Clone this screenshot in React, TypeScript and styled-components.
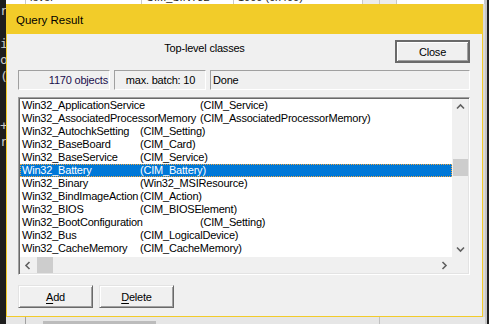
import styled, { createGlobalStyle } from 'styled-components';

const GlobalStyle = createGlobalStyle`
  html, body {
    margin: 0;
    padding: 0;
    background: #1e1e1e;
    overflow: hidden;
  }
  * {
    box-sizing: border-box;
  }
`;

const uiFont = `'Liberation Sans', Arial, sans-serif`;

interface ClassRow {
  name: string;
  parent: string;
  tab: number;
  selected?: boolean;
}

const rows: ClassRow[] = [
  { name: 'Win32_ApplicationService', parent: 'CIM_Service', tab: 178 },
  { name: 'Win32_AssociatedProcessorMemory', parent: 'CIM_AssociatedProcessorMemory', tab: 178 },
  { name: 'Win32_AutochkSetting', parent: 'CIM_Setting', tab: 118 },
  { name: 'Win32_BaseBoard', parent: 'CIM_Card', tab: 118 },
  { name: 'Win32_BaseService', parent: 'CIM_Service', tab: 118 },
  { name: 'Win32_Battery', parent: 'CIM_Battery', tab: 118, selected: true },
  { name: 'Win32_Binary', parent: 'Win32_MSIResource', tab: 118 },
  { name: 'Win32_BindImageAction', parent: 'CIM_Action', tab: 118 },
  { name: 'Win32_BIOS', parent: 'CIM_BIOSElement', tab: 118 },
  { name: 'Win32_BootConfiguration', parent: 'CIM_Setting', tab: 178 },
  { name: 'Win32_Bus', parent: 'CIM_LogicalDevice', tab: 118 },
  { name: 'Win32_CacheMemory', parent: 'CIM_CacheMemory', tab: 118 },
  { name: 'Win32_CDROMDrive', parent: 'CIM_CDROMDrive', tab: 118 },
];

// characters of the code editor peeking out at the left edge
const editorLines = ['r', '', 'i', 'o', '(', '', '', '+', 'r', '', '', '', '', '', '', '', '', '', ''];

/* ---------- desktop behind the dialog ---------- */

const Desktop = styled.div`
  position: relative;
  width: 489px;
  height: 324px;
  display: flex;
  overflow: hidden;
  font-family: ${uiFont};
`;

const EditorStrip = styled.div`
  width: 6px;
  overflow: hidden;
  background: #1e1e1e;
  color: #cccccc;
  font-family: 'DejaVu Sans Mono', monospace;
  font-size: 13px;
  line-height: 16.4px;
  padding-top: 3px;
  white-space: pre;
`;

const BackWindow = styled.div`
  width: 479px;
  display: flex;
  flex-direction: column;
  background: #d9d9d9;
`;

const BackTop = styled.div`
  height: 4px;
  background: #ffffff;
  display: flex;
  overflow: hidden;
  font-size: 11px;
  color: #222;
`;

const BackCell = styled.div<{ $w: number; $shade?: boolean }>`
  width: ${({ $w }) => $w}px;
  flex-shrink: 0;
  border-right: 1px solid #c8c8c8;
  background: ${({ $shade }) => ($shade ? '#ececec' : '#ffffff')};
  line-height: 4px;
  padding-left: 4px;
  margin-top: -5px;
  height: 9px;
  white-space: nowrap;
  overflow: hidden;
`;

const BackMiddle = styled.div`
  flex: 1;
`;

const BackBottom = styled.div`
  height: 7px;
  display: flex;
  background: #e6e6e6;
`;

const BackGutter = styled.div`
  width: 20px;
  border-right: 1px solid #a0a0a0;
`;

const BackScroll = styled.div`
  width: 354px;
  padding: 4px 0 0 17px;
  border-right: 1px solid #c0c0c0;
`;

const BackThumb = styled.div`
  width: 113px;
  height: 3px;
  background: #bcbcbc;
`;

const DarkEdge = styled.div`
  flex: 1;
  background: #1f1f1f;
  border-left: 2px solid #c6c6c6;
`;

/* ---------- dialog ---------- */

const Dialog = styled.div`
  position: absolute;
  left: 6px;
  top: 4px;
  width: 477px;
  height: 313px;
  border: 1px solid #f2cb2b;
  background: #f0f0f0;
  display: flex;
  flex-direction: column;
`;

const TitleBar = styled.div`
  height: 29px;
  flex-shrink: 0;
  background: #f2cc29;
  display: flex;
  align-items: center;
  padding-left: 9px;
  font-size: 11.5px;
  color: #000;
`;

const Body = styled.div`
  flex: 1;
  display: flex;
  flex-direction: column;
  padding: 6px 12px 0 11px;
  font-size: 11px;
  letter-spacing: -0.2px;
  color: #000;
`;

const Header = styled.div`
  display: flex;
  align-items: center;
  height: 23px;
`;

const Caption = styled.div`
  flex: 1;
  text-align: center;
  padding-bottom: 7px;
`;

const Button = styled.button<{ $default?: boolean }>`
  width: 75px;
  height: 23px;
  padding: 0;
  margin: 0;
  font-family: ${uiFont};
  font-size: 11px;
  letter-spacing: -0.2px;
  color: #000;
  background: #f0f0f0;
  border-style: solid;
  border-width: 1px;
  border-color: #e3e3e3 #696969 #696969 #e3e3e3;
  box-shadow: inset 1px 1px 0 #ffffff, inset -1px -1px 0 #a0a0a0;

  ${({ $default }) =>
    $default &&
    `
    border: 2px solid #6a6a6a;
    box-shadow: inset 1px 1px 0 #ffffff, inset -1px -1px 0 #a0a0a0;
  `}

  u {
    text-decoration: underline;
    text-underline-offset: 2px;
  }
`;

const CloseButton = styled(Button)`
  margin-left: 4px;
`;

const StatusRow = styled.div`
  display: grid;
  grid-template-columns: 92px 92px 1fr;
  gap: 4px;
  margin-top: 7px;
  height: 20px;
`;

const StatusBox = styled.div<{ $align: 'left' | 'center' | 'right'; $ink?: string }>`
  border-style: solid;
  border-width: 1px;
  border-color: #a0a0a0 #ffffff #ffffff #a0a0a0;
  display: flex;
  align-items: center;
  justify-content: ${({ $align }) =>
    $align === 'left' ? 'flex-start' : $align === 'right' ? 'flex-end' : 'center'};
  padding: 0 1px 0 2px;
  color: ${({ $ink }) => $ink || '#000'};
  white-space: nowrap;
`;

const ListBox = styled.div`
  margin-top: 7px;
  height: 178px;
  border-style: solid;
  border-width: 1px;
  border-color: #a0a0a0 #ffffff #ffffff #a0a0a0;
  box-shadow: inset 1px 1px 0 #696969, inset -1px -1px 0 #e3e3e3;
  padding: 1px;
  display: grid;
  grid-template-columns: 1fr 16px;
  grid-template-rows: 1fr 16px;
`;

const Rows = styled.div`
  background: #ffffff;
  overflow: hidden;
  white-space: nowrap;
`;

const Row = styled.div<{ $selected?: boolean }>`
  height: 13px;
  line-height: 13px;
  padding-left: 2px;
  display: flex;
  background: ${({ $selected }) => ($selected ? '#0078d7' : 'transparent')};
  color: ${({ $selected }) => ($selected ? '#ffffff' : '#000000')};
  outline: ${({ $selected }) => ($selected ? '1px dotted #f0a640' : 'none')};
  outline-offset: -1px;
`;

const ClassName = styled.span<{ $tab: number }>`
  display: inline-block;
  width: ${({ $tab }) => $tab}px;
  flex-shrink: 0;
`;

const ScrollBar = styled.div<{ $vertical?: boolean }>`
  background: #f0f0f0;
  display: flex;
  flex-direction: ${({ $vertical }) => ($vertical ? 'column' : 'row')};
`;

const ArrowButton = styled.div`
  width: 16px;
  height: 16px;
  flex-shrink: 0;
  display: flex;
  align-items: center;
  justify-content: center;
`;

const Track = styled.div<{ $vertical?: boolean }>`
  flex: 1;
  display: flex;
  flex-direction: ${({ $vertical }) => ($vertical ? 'column' : 'row')};
`;

const Thumb = styled.div<{ $vertical?: boolean }>`
  background: #cdcdcd;
  ${({ $vertical }) =>
    $vertical ? 'width: 15px; height: 17px; margin-left: 1px;' : 'width: 16px; height: 16px;'}
`;

const Corner = styled.div`
  background: #f0f0f0;
`;

const Footer = styled.div`
  display: flex;
  gap: 6px;
  margin-top: 10px;
`;

type Dir = 'up' | 'down' | 'left' | 'right';

const chevrons: Record<Dir, string> = {
  up: 'M1 5.5 L4.5 2 L8 5.5',
  down: 'M1 2.5 L4.5 6 L8 2.5',
  left: 'M5.5 1 L2 4.5 L5.5 8',
  right: 'M2.5 1 L6 4.5 L2.5 8',
};

const Chevron = ({ dir }: { dir: Dir }) => (
  <svg width="9" height="9" viewBox="0 0 9 9">
    <path d={chevrons[dir]} fill="none" stroke="#606060" strokeWidth="1.6" />
  </svg>
);

const App = () => {
  return (
    <>
      <GlobalStyle />
      <Desktop>
        <EditorStrip>{editorLines.join('\n')}</EditorStrip>
        <BackWindow>
          <BackTop>
            <BackCell $w={20}> </BackCell>
            <BackCell $w={116}>level</BackCell>
            <BackCell $w={92}>CIM_SINT32</BackCell>
            <BackCell $w={129}>1000 (0x400)</BackCell>
            <BackCell $w={17} $shade> </BackCell>
            <BackCell $w={17} $shade> </BackCell>
            <BackCell $w={88}> </BackCell>
          </BackTop>
          <BackMiddle />
          <BackBottom>
            <BackGutter />
            <BackScroll>
              <BackThumb />
            </BackScroll>
          </BackBottom>
        </BackWindow>
        <DarkEdge />

        <Dialog>
          <TitleBar>Query Result</TitleBar>
          <Body>
            <Header>
              <Caption>Top-level classes</Caption>
              <CloseButton $default>Close</CloseButton>
            </Header>

            <StatusRow>
              <StatusBox $align="right" $ink="#1b0f4d">1170 objects</StatusBox>
              <StatusBox $align="center">max. batch: 10</StatusBox>
              <StatusBox $align="left">Done</StatusBox>
            </StatusRow>

            <ListBox>
              <Rows>
                {rows.map((row) => (
                  <Row key={row.name} $selected={row.selected}>
                    <ClassName $tab={row.tab}>{row.name}</ClassName>
                    <span>({row.parent})</span>
                  </Row>
                ))}
              </Rows>
              <ScrollBar $vertical>
                <ArrowButton>
                  <Chevron dir="up" />
                </ArrowButton>
                <Track $vertical>
                  <Thumb $vertical style={{ marginTop: 44 }} />
                </Track>
                <ArrowButton>
                  <Chevron dir="down" />
                </ArrowButton>
              </ScrollBar>
              <ScrollBar>
                <ArrowButton>
                  <Chevron dir="left" />
                </ArrowButton>
                <Track>
                  <Thumb style={{ marginLeft: 1 }} />
                </Track>
                <ArrowButton>
                  <Chevron dir="right" />
                </ArrowButton>
              </ScrollBar>
              <Corner />
            </ListBox>

            <Footer>
              <Button>
                <u>A</u>dd
              </Button>
              <Button>
                <u>D</u>elete
              </Button>
            </Footer>
          </Body>
        </Dialog>
      </Desktop>
    </>
  );
};

export default App;
